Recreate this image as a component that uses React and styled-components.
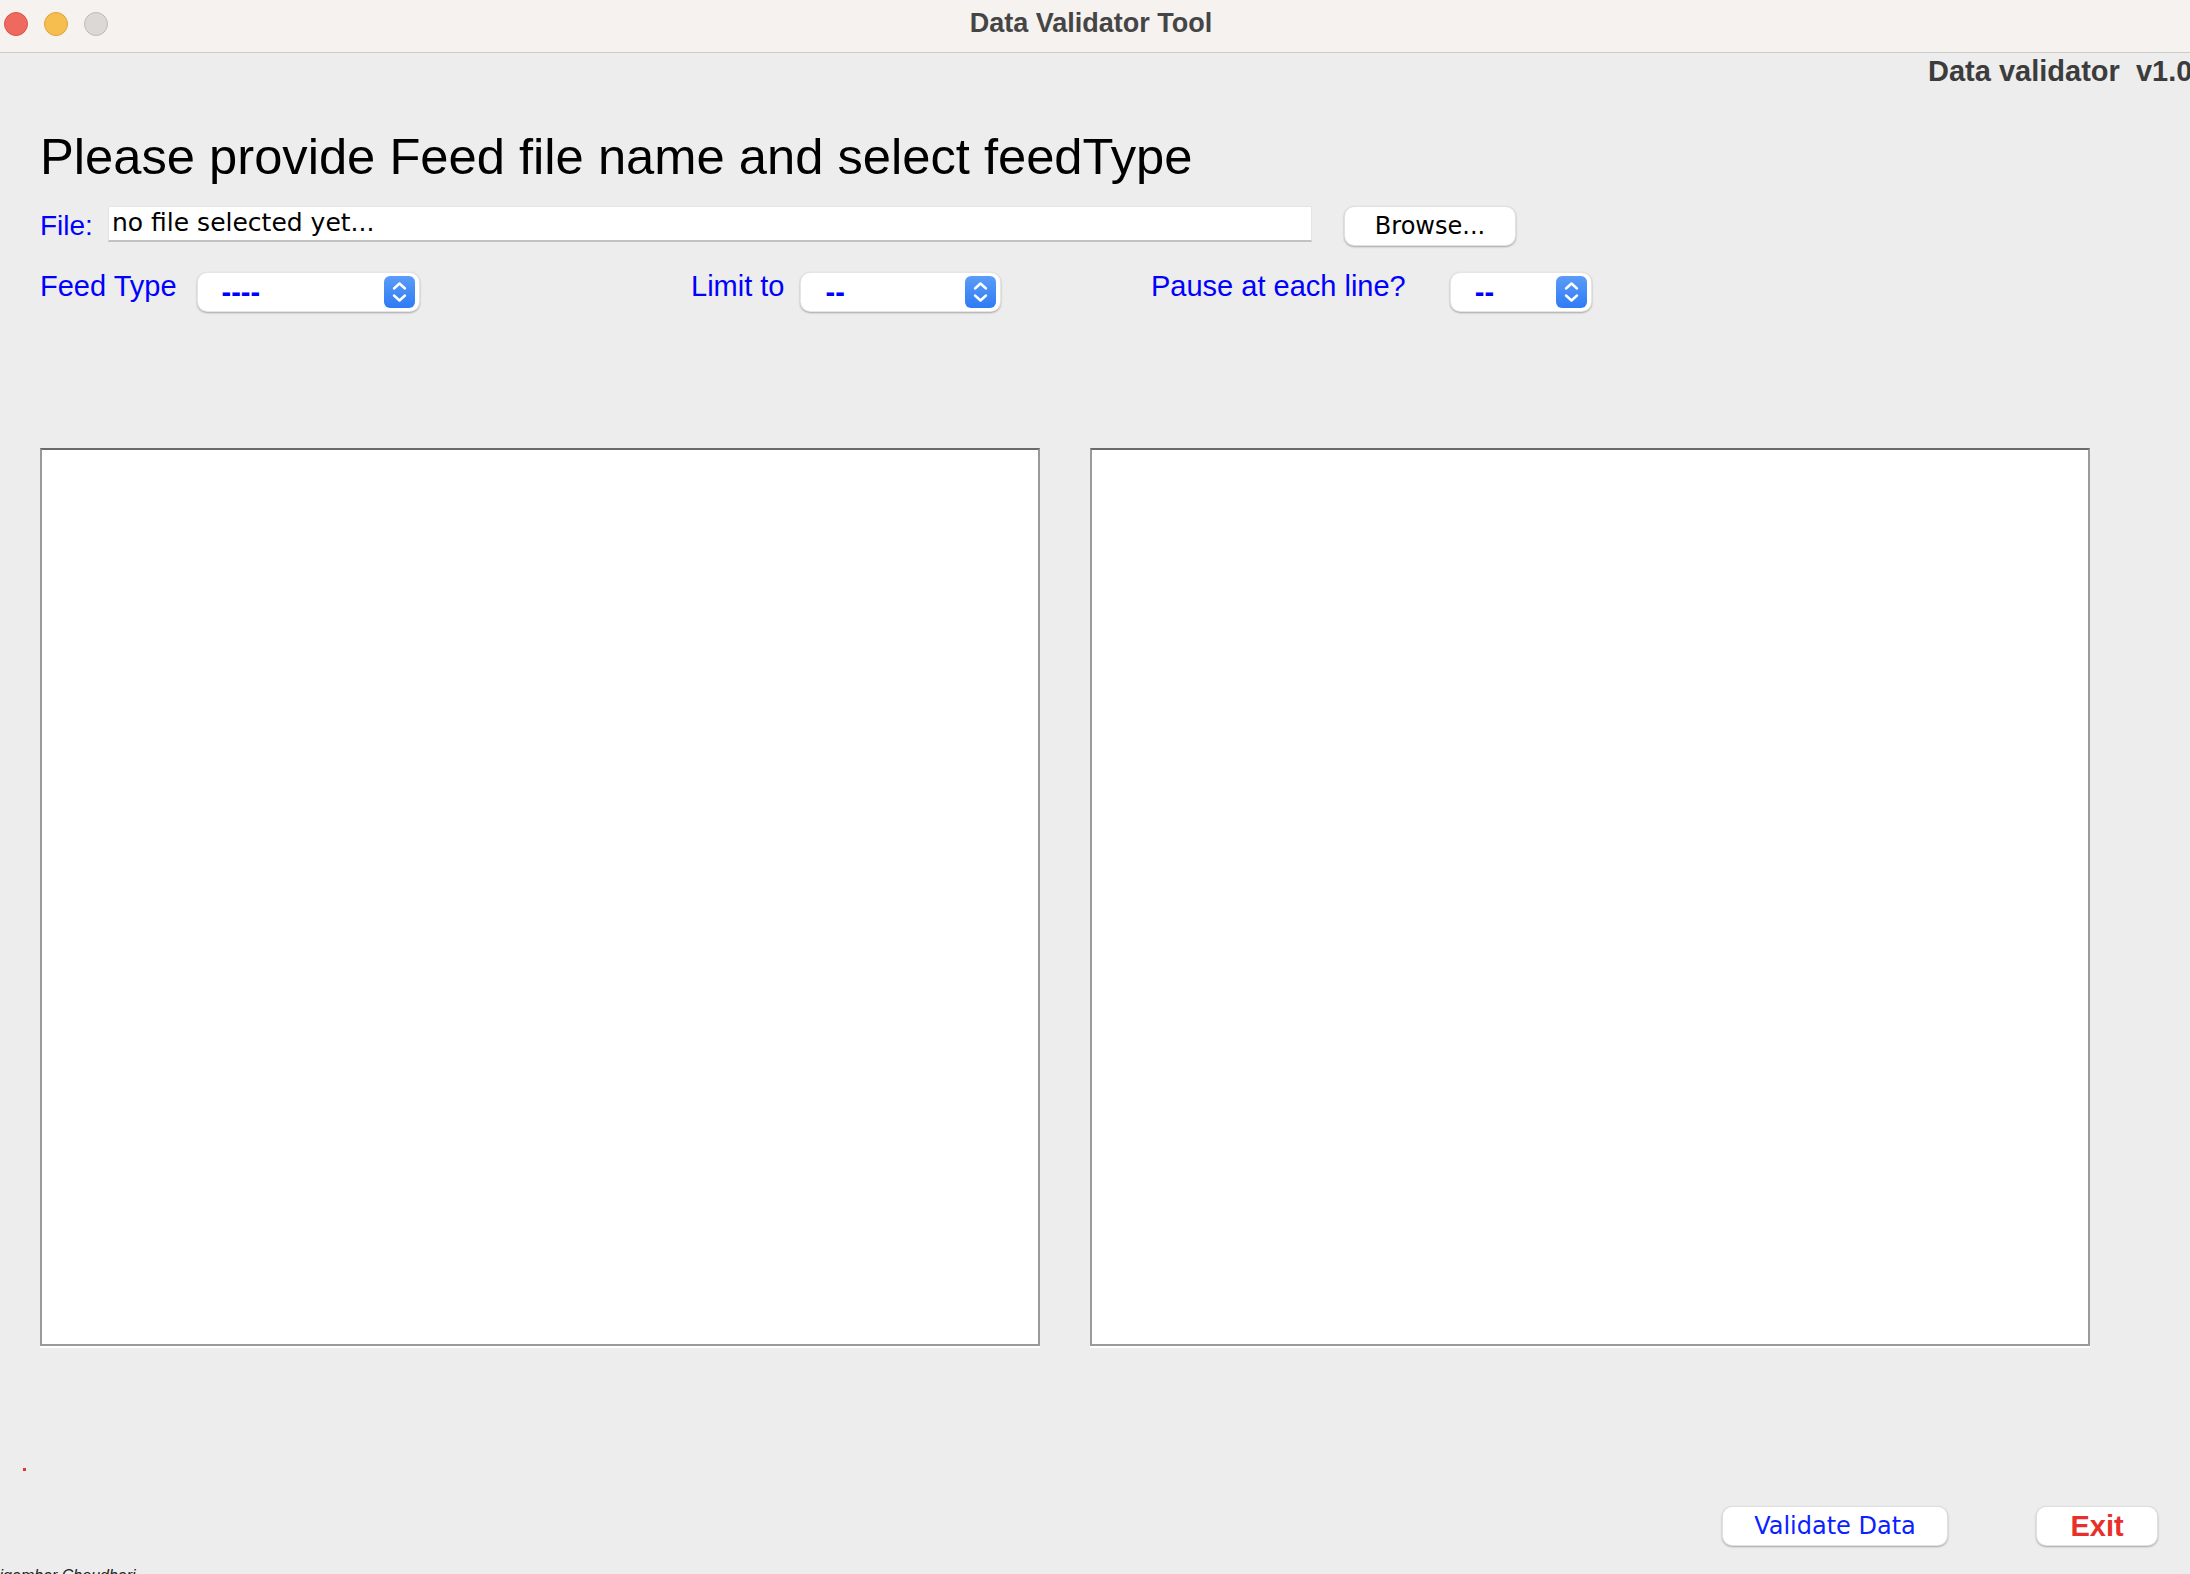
import React from 'react';
import styled, { createGlobalStyle } from 'styled-components';

const GlobalStyle = createGlobalStyle`
  html, body {
    margin: 0;
    padding: 0;
    background: #ededed;
  }
  body {
    overflow: hidden;
    font-family: "Liberation Sans", Arial, sans-serif;
  }
`;

const Window = styled.div`
  height: 100vh;
  overflow: hidden;
  background: #ededed;
`;

const TitleBar = styled.div`
  height: 53px;
  box-sizing: border-box;
  display: grid;
  grid-template-columns: 1fr auto 1fr;
  align-items: start;
  background: #f6f2f0;
  border-bottom: 1px solid #cfcbc9;
`;

const Lights = styled.div`
  display: flex;
  gap: 16px;
  padding: 12px 0 0 4px;
`;

const Light = styled.span`
  width: 24px;
  height: 24px;
  box-sizing: border-box;
  border-radius: 50%;
  background: ${(p) => p.$fill};
  border: 1px solid ${(p) => p.$ring};
`;

const WindowTitle = styled.div`
  padding-top: 10px;
  margin-right: 8px;
  font-size: 27px;
  line-height: 27px;
  font-weight: bold;
  color: #454545;
`;

const Version = styled.div`
  height: 36px;
  padding-left: 1928px;
  font-size: 29px;
  line-height: 36px;
  font-weight: bold;
  color: #3c3c3c;
  white-space: pre;
  overflow: hidden;
`;

const Heading = styled.h1`
  margin: 43px 0 0;
  padding-left: 40px;
  font-size: 50.7px;
  line-height: 50px;
  font-weight: normal;
  color: #000;
  white-space: nowrap;
`;

const FileRow = styled.div`
  margin-top: 24px;
  padding-left: 40px;
  display: flex;
  align-items: flex-start;
`;

const BlueLabel = styled.span`
  flex: 0 0 ${(p) => (p.$width ? `${p.$width}px` : 'auto')};
  font-size: ${(p) => p.$size || 29}px;
  line-height: 40px;
  color: #0000ff;
  white-space: nowrap;
`;

const FileInput = styled.div`
  width: 1204px;
  height: 36px;
  box-sizing: border-box;
  padding-left: 3px;
  background: #fff;
  border: 1px solid #e4e4e4;
  border-bottom: 2px solid #c2c2c2;
  font-family: "DejaVu Sans", Verdana, sans-serif;
  font-size: 25px;
  line-height: 32px;
  color: #000;
  white-space: nowrap;
`;

const MacButton = styled.button`
  width: ${(p) => p.$width}px;
  height: 40px;
  margin-left: ${(p) => p.$offset || 0}px;
  padding: 0;
  box-sizing: border-box;
  background: #fff;
  border: 0.5px solid rgba(0, 0, 0, 0.12);
  border-radius: 10px;
  box-shadow: 0 1px 2px rgba(0, 0, 0, 0.3);
  font-family: ${(p) => (p.$bold ? '"Liberation Sans", Arial, sans-serif' : '"DejaVu Sans", Verdana, sans-serif')};
  font-size: ${(p) => (p.$bold ? 29 : 24)}px;
  font-weight: ${(p) => (p.$bold ? 'bold' : 'normal')};
  color: ${(p) => p.$color || '#000'};
  line-height: 38px;
  cursor: pointer;
`;

const OptionsRow = styled.div`
  margin-top: 20px;
  padding-left: 40px;
  display: grid;
  grid-template-columns: 651px 460px auto;
`;

const Field = styled.div`
  display: flex;
  align-items: flex-start;
  gap: ${(p) => p.$gap}px;
`;

const Select = styled.div`
  margin-top: 6px;
  width: ${(p) => p.$width}px;
  height: 40px;
  box-sizing: border-box;
  padding: 0 4px 0 24px;
  display: flex;
  align-items: center;
  justify-content: space-between;
  background: #fff;
  border: 0.5px solid rgba(0, 0, 0, 0.1);
  border-radius: 10px;
  box-shadow: 0 1px 2px rgba(0, 0, 0, 0.3);
`;

const SelectValue = styled.span`
  font-size: 29px;
  line-height: 40px;
  font-weight: bold;
  color: #0000ff;
`;

const Panels = styled.div`
  margin-top: 136px;
  padding-left: 40px;
  display: flex;
  gap: 50px;
`;

const TextPanel = styled.div`
  width: 1000px;
  height: 898px;
  box-sizing: border-box;
  background: #fff;
  border: 2px solid #9a9a9a;
  border-top-color: #6a6a6a;
  box-shadow: 0 2px 0 #fff;
`;

const Dot = styled.span`
  display: block;
  width: 3px;
  height: 3px;
  margin: 122px 0 0 23px;
  background: #e3342f;
`;

const ActionRow = styled.div`
  margin-top: 35px;
  padding-right: 32px;
  display: flex;
  justify-content: flex-end;
  gap: 88px;
`;

const Credit = styled.div`
  margin-top: 22px;
  text-indent: -12px;
  font-size: 16px;
  line-height: 16px;
  font-style: italic;
  color: #222;
  white-space: nowrap;
`;

const Stepper = () => (
  <svg width="31" height="32" viewBox="0 0 31 32">
    <defs>
      <linearGradient id="stepGrad" x1="0" y1="0" x2="0" y2="1">
        <stop offset="0" stopColor="#5a9cf8" />
        <stop offset="1" stopColor="#2f7bf5" />
      </linearGradient>
    </defs>
    <rect width="31" height="32" rx="6" fill="url(#stepGrad)" />
    <path d="M10 12.5 L15.5 7.5 L21 12.5" fill="none" stroke="#fff" strokeWidth="2.4" strokeLinecap="round" strokeLinejoin="round" />
    <path d="M10 19.5 L15.5 24.5 L21 19.5" fill="none" stroke="#fff" strokeWidth="2.4" strokeLinecap="round" strokeLinejoin="round" />
  </svg>
);

const Dropdown = ({ width, value }) => (
  <Select $width={width}>
    <SelectValue>{value}</SelectValue>
    <Stepper />
  </Select>
);

export default function App() {
  return (
    <Window>
      <GlobalStyle />
      <TitleBar>
        <Lights>
          <Light $fill="#ee6a5f" $ring="#d85549" />
          <Light $fill="#f6be4f" $ring="#dda33a" />
          <Light $fill="#dcd8d5" $ring="#bebab7" />
        </Lights>
        <WindowTitle>Data Validator Tool</WindowTitle>
        <div />
      </TitleBar>

      <Version>{'Data validator  v1.0'}</Version>

      <Heading>Please provide Feed file name and select feedType</Heading>

      <FileRow>
        <BlueLabel $width={68} $size={28}>File:</BlueLabel>
        <FileInput>no file selected yet...</FileInput>
        <MacButton $width={172} $offset={32}>Browse...</MacButton>
      </FileRow>

      <OptionsRow>
        <Field $gap={20}>
          <BlueLabel>Feed Type</BlueLabel>
          <Dropdown width={223} value="----" />
        </Field>
        <Field $gap={16}>
          <BlueLabel>Limit to</BlueLabel>
          <Dropdown width={201} value="--" />
        </Field>
        <Field $gap={44}>
          <BlueLabel>Pause at each line?</BlueLabel>
          <Dropdown width={142} value="--" />
        </Field>
      </OptionsRow>

      <Panels>
        <TextPanel />
        <TextPanel />
      </Panels>

      <Dot />

      <ActionRow>
        <MacButton $width={226} $color="#0a22ff">Validate Data</MacButton>
        <MacButton $width={122} $color="#e8302a" $bold>Exit</MacButton>
      </ActionRow>

      <Credit>Digambar Choudhari</Credit>
    </Window>
  );
}
